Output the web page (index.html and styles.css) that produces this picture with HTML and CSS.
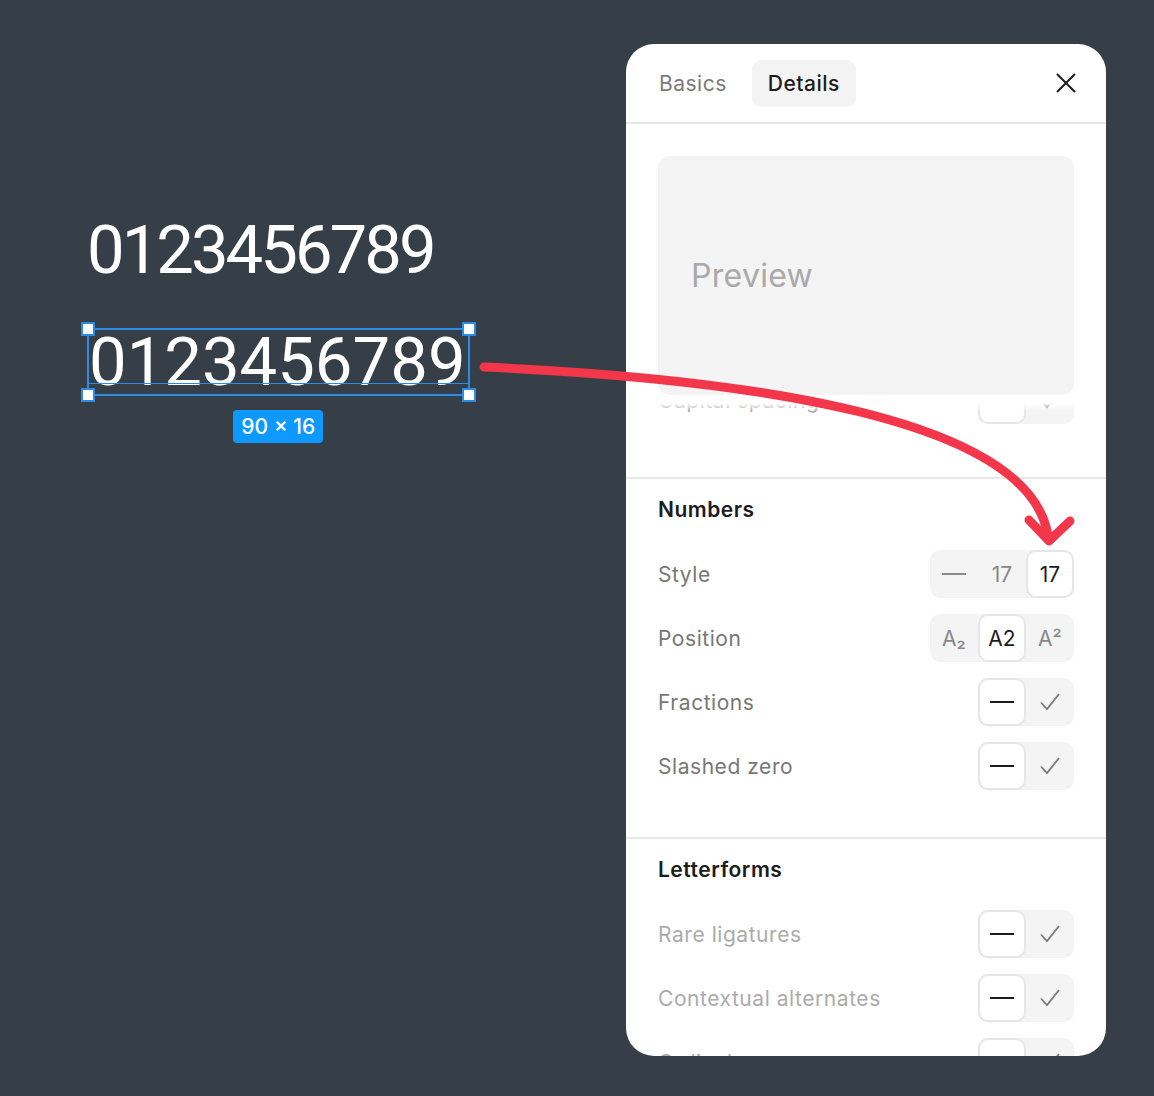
FILE: index.html
```html
<!DOCTYPE html>
<html lang="en">
<head>
    <meta charset="UTF-8">
    <meta name="viewport" content="width=device-width, initial-scale=1.0">
    <title>Number features</title>
    <link rel="stylesheet" href="styles.css">
</head>
<body>
    <div class="canvas">
        <div class="sample">0123456789</div>
        <div class="selection">
            <div class="sel-box">
                <span class="sample sample-tnum">0123456789</span>
                <span class="handle tl"></span>
                <span class="handle tr"></span>
                <span class="handle bl"></span>
                <span class="handle br"></span>
            </div>
            <div class="size-badge">90 × 16</div>
        </div>
    </div>

    <div class="panel">
        <header class="panel-header">
            <nav class="tabs">
                <button class="tab">Basics</button>
                <button class="tab active">Details</button>
            </nav>
            <button class="close" aria-label="Close">
                <svg width="22" height="22" viewBox="0 0 22 22"><path d="M2 2L20 20M20 2L2 20" stroke="#1e1e1e" stroke-width="2" fill="none"/></svg>
            </button>
        </header>

        <div class="panel-body">
            <div class="preview-wrap">
                <div class="preview">Preview</div>
            </div>

            <section class="group">
                <div class="row">
                    <span class="label muted">Capital spacing</span>
                    <div class="seg">
                        <span class="opt selected"></span>
                        <span class="opt"><svg class="check" viewBox="0 0 24 24"><path d="M3 12.5L9 19L21 4"/></svg></span>
                    </div>
                </div>
            </section>

            <section class="group">
                <h2>Numbers</h2>
                <div class="row">
                    <span class="label">Style</span>
                    <div class="seg">
                        <span class="opt"><i class="dash"></i></span>
                        <span class="opt">17</span>
                        <span class="opt selected">17</span>
                    </div>
                </div>
                <div class="row">
                    <span class="label">Position</span>
                    <div class="seg">
                        <span class="opt">A₂</span>
                        <span class="opt selected">A2</span>
                        <span class="opt">A²</span>
                    </div>
                </div>
                <div class="row">
                    <span class="label">Fractions</span>
                    <div class="seg">
                        <span class="opt selected"><i class="dash dark"></i></span>
                        <span class="opt"><svg class="check" viewBox="0 0 24 24"><path d="M3 12.5L9 19L21 4"/></svg></span>
                    </div>
                </div>
                <div class="row">
                    <span class="label">Slashed zero</span>
                    <div class="seg">
                        <span class="opt selected"><i class="dash dark"></i></span>
                        <span class="opt"><svg class="check" viewBox="0 0 24 24"><path d="M3 12.5L9 19L21 4"/></svg></span>
                    </div>
                </div>
            </section>

            <section class="group">
                <h2>Letterforms</h2>
                <div class="row">
                    <span class="label muted">Rare ligatures</span>
                    <div class="seg">
                        <span class="opt selected"><i class="dash dark"></i></span>
                        <span class="opt"><svg class="check" viewBox="0 0 24 24"><path d="M3 12.5L9 19L21 4"/></svg></span>
                    </div>
                </div>
                <div class="row">
                    <span class="label muted">Contextual alternates</span>
                    <div class="seg">
                        <span class="opt selected"><i class="dash dark"></i></span>
                        <span class="opt"><svg class="check" viewBox="0 0 24 24"><path d="M3 12.5L9 19L21 4"/></svg></span>
                    </div>
                </div>
                <div class="row">
                    <span class="label muted">Ordinals</span>
                    <div class="seg">
                        <span class="opt selected"><i class="dash dark"></i></span>
                        <span class="opt"><svg class="check" viewBox="0 0 24 24"><path d="M3 12.5L9 19L21 4"/></svg></span>
                    </div>
                </div>
            </section>
        </div>
    </div>

    <!-- annotation arrow -->
    <svg class="arrow" width="1154" height="1096" viewBox="0 0 1154 1096">
        <path d="M484 367C750 379 1030 418 1048 536" />
        <path d="M1029 520L1049 541L1070 521" />
    </svg>
</body>
</html>
```

FILE: styles.css
```css
body {
    font-family: Inter, "Noto Sans", sans-serif;
    background-color: #363f48;
    margin: 0;
    padding: 44px 48px 40px 0;
    display: flex;
    justify-content: space-between;
    height: 1096px;
    box-sizing: border-box;
    overflow: hidden;
}

/* Canvas */
.canvas {
    padding: 173px 0 0 87px;
    display: flex;
    flex-direction: column;
}

.sample {
    font-family: Roboto, Inter, sans-serif;
    color: #fff;
    font-size: 67px;
    line-height: 66px;
    letter-spacing: -3px;
    white-space: nowrap;
}

.selection {
    margin-top: 45px;
    display: inline-flex;
    flex-direction: column;
    align-items: center;
    align-self: flex-start;
}

.sel-box {
    position: relative;
    border: 2px solid #2a8ce4;
    padding-right: 2px;
}

.sel-box::after {
    content: "";
    position: absolute;
    left: 0;
    right: 0;
    top: 53px;
    height: 1px;
    background-color: #2a8ce4;
}

.sample-tnum {
    display: block;
    line-height: 64px;
    font-variant-numeric: tabular-nums;
    letter-spacing: 0;
}

.handle {
    position: absolute;
    width: 10px;
    height: 10px;
    background-color: #fff;
    border: 2px solid #2a8ce4;
}

.handle.tl { left: -8px; top: -8px; }
.handle.tr { right: -8px; top: -8px; }
.handle.bl { left: -8px; bottom: -8px; }
.handle.br { right: -8px; bottom: -8px; }

.size-badge {
    margin-top: 14px;
    background-color: #0d99ff;
    color: #fff;
    font-size: 21px;
    font-weight: 500;
    line-height: 33px;
    padding: 0 8px;
    border-radius: 4px;
}

/* Panel */
.panel {
    width: 480px;
    height: 1012px;
    background-color: #fff;
    border-radius: 28px;
    overflow: hidden;
    display: flex;
    flex-direction: column;
}

.panel-header {
    height: 78px;
    border-bottom: 2px solid #e8e8e8;
    display: flex;
    align-items: center;
    justify-content: space-between;
    padding: 0 20px 0 17px;
    flex-shrink: 0;
}

.tabs {
    display: flex;
    gap: 9px;
}

.tab {
    font-family: inherit;
    font-size: 21px;
    letter-spacing: 0.5px;
    color: #7b7b7b;
    background: none;
    border: none;
    height: 47px;
    padding: 0 16px;
    border-radius: 9px;
}

.tab.active {
    background-color: #f4f4f4;
    color: #1c1c1c;
    font-weight: 500;
}

.close {
    width: 40px;
    height: 40px;
    border: none;
    background: none;
    padding: 0;
    display: flex;
    align-items: center;
    justify-content: center;
}

.panel-body {
    display: flex;
    flex-direction: column;
}

.preview-wrap {
    position: relative;
    z-index: 1;
    background-color: #fff;
    padding: 32px 32px 8px;
    margin-bottom: -27px;
}

.preview-wrap::after {
    content: "";
    position: absolute;
    left: 0;
    right: 0;
    top: 100%;
    height: 8px;
    background: linear-gradient(#fff, rgba(255, 255, 255, 0));
}

.preview {
    height: 239px;
    background-color: #f4f4f4;
    border-radius: 12px;
    display: flex;
    align-items: center;
    padding-left: 33px;
    font-size: 32px;
    color: #a9a9a9;
    letter-spacing: 0.3px;
}

.group {
    padding: 19px 32px 47px;
    display: flex;
    flex-direction: column;
    gap: 16px;
}

.group + .group {
    border-top: 2px solid #e8e8e8;
}

.group:first-of-type {
    padding-top: 0;
    padding-bottom: 53px;
}

.group h2 {
    margin: 0 0 12px;
    font-size: 21px;
    line-height: 24px;
    letter-spacing: 0.5px;
    font-weight: 600;
    color: #1c1c1c;
}

.row {
    height: 48px;
    display: flex;
    align-items: center;
    justify-content: space-between;
}

.label {
    font-size: 21px;
    color: #777;
    letter-spacing: 0.55px;
}

.label.muted {
    color: #ababab;
}

.seg {
    display: flex;
    background-color: #f4f4f4;
    border-radius: 10px;
}

.opt {
    width: 48px;
    height: 48px;
    box-sizing: border-box;
    display: flex;
    align-items: center;
    justify-content: center;
    font-size: 21px;
    color: #888;
    border-radius: 10px;
}

.opt.selected {
    background-color: #fff;
    border: 2px solid #e6e6e6;
    color: #1c1c1c;
}

.dash {
    display: block;
    width: 24px;
    height: 2px;
    background-color: #8a8a8a;
}

.dash.dark {
    background-color: #1c1c1c;
}

.check {
    width: 24px;
    height: 24px;
    fill: none;
    stroke: #7a7a7a;
    stroke-width: 1.8;
}

/* Arrow overlay */
.arrow {
    position: absolute;
    left: 0;
    top: 0;
    z-index: 2;
    pointer-events: none;
}

.arrow path {
    fill: none;
    stroke: #f4364a;
    stroke-width: 9;
    stroke-linecap: round;
    stroke-linejoin: round;
}
```
